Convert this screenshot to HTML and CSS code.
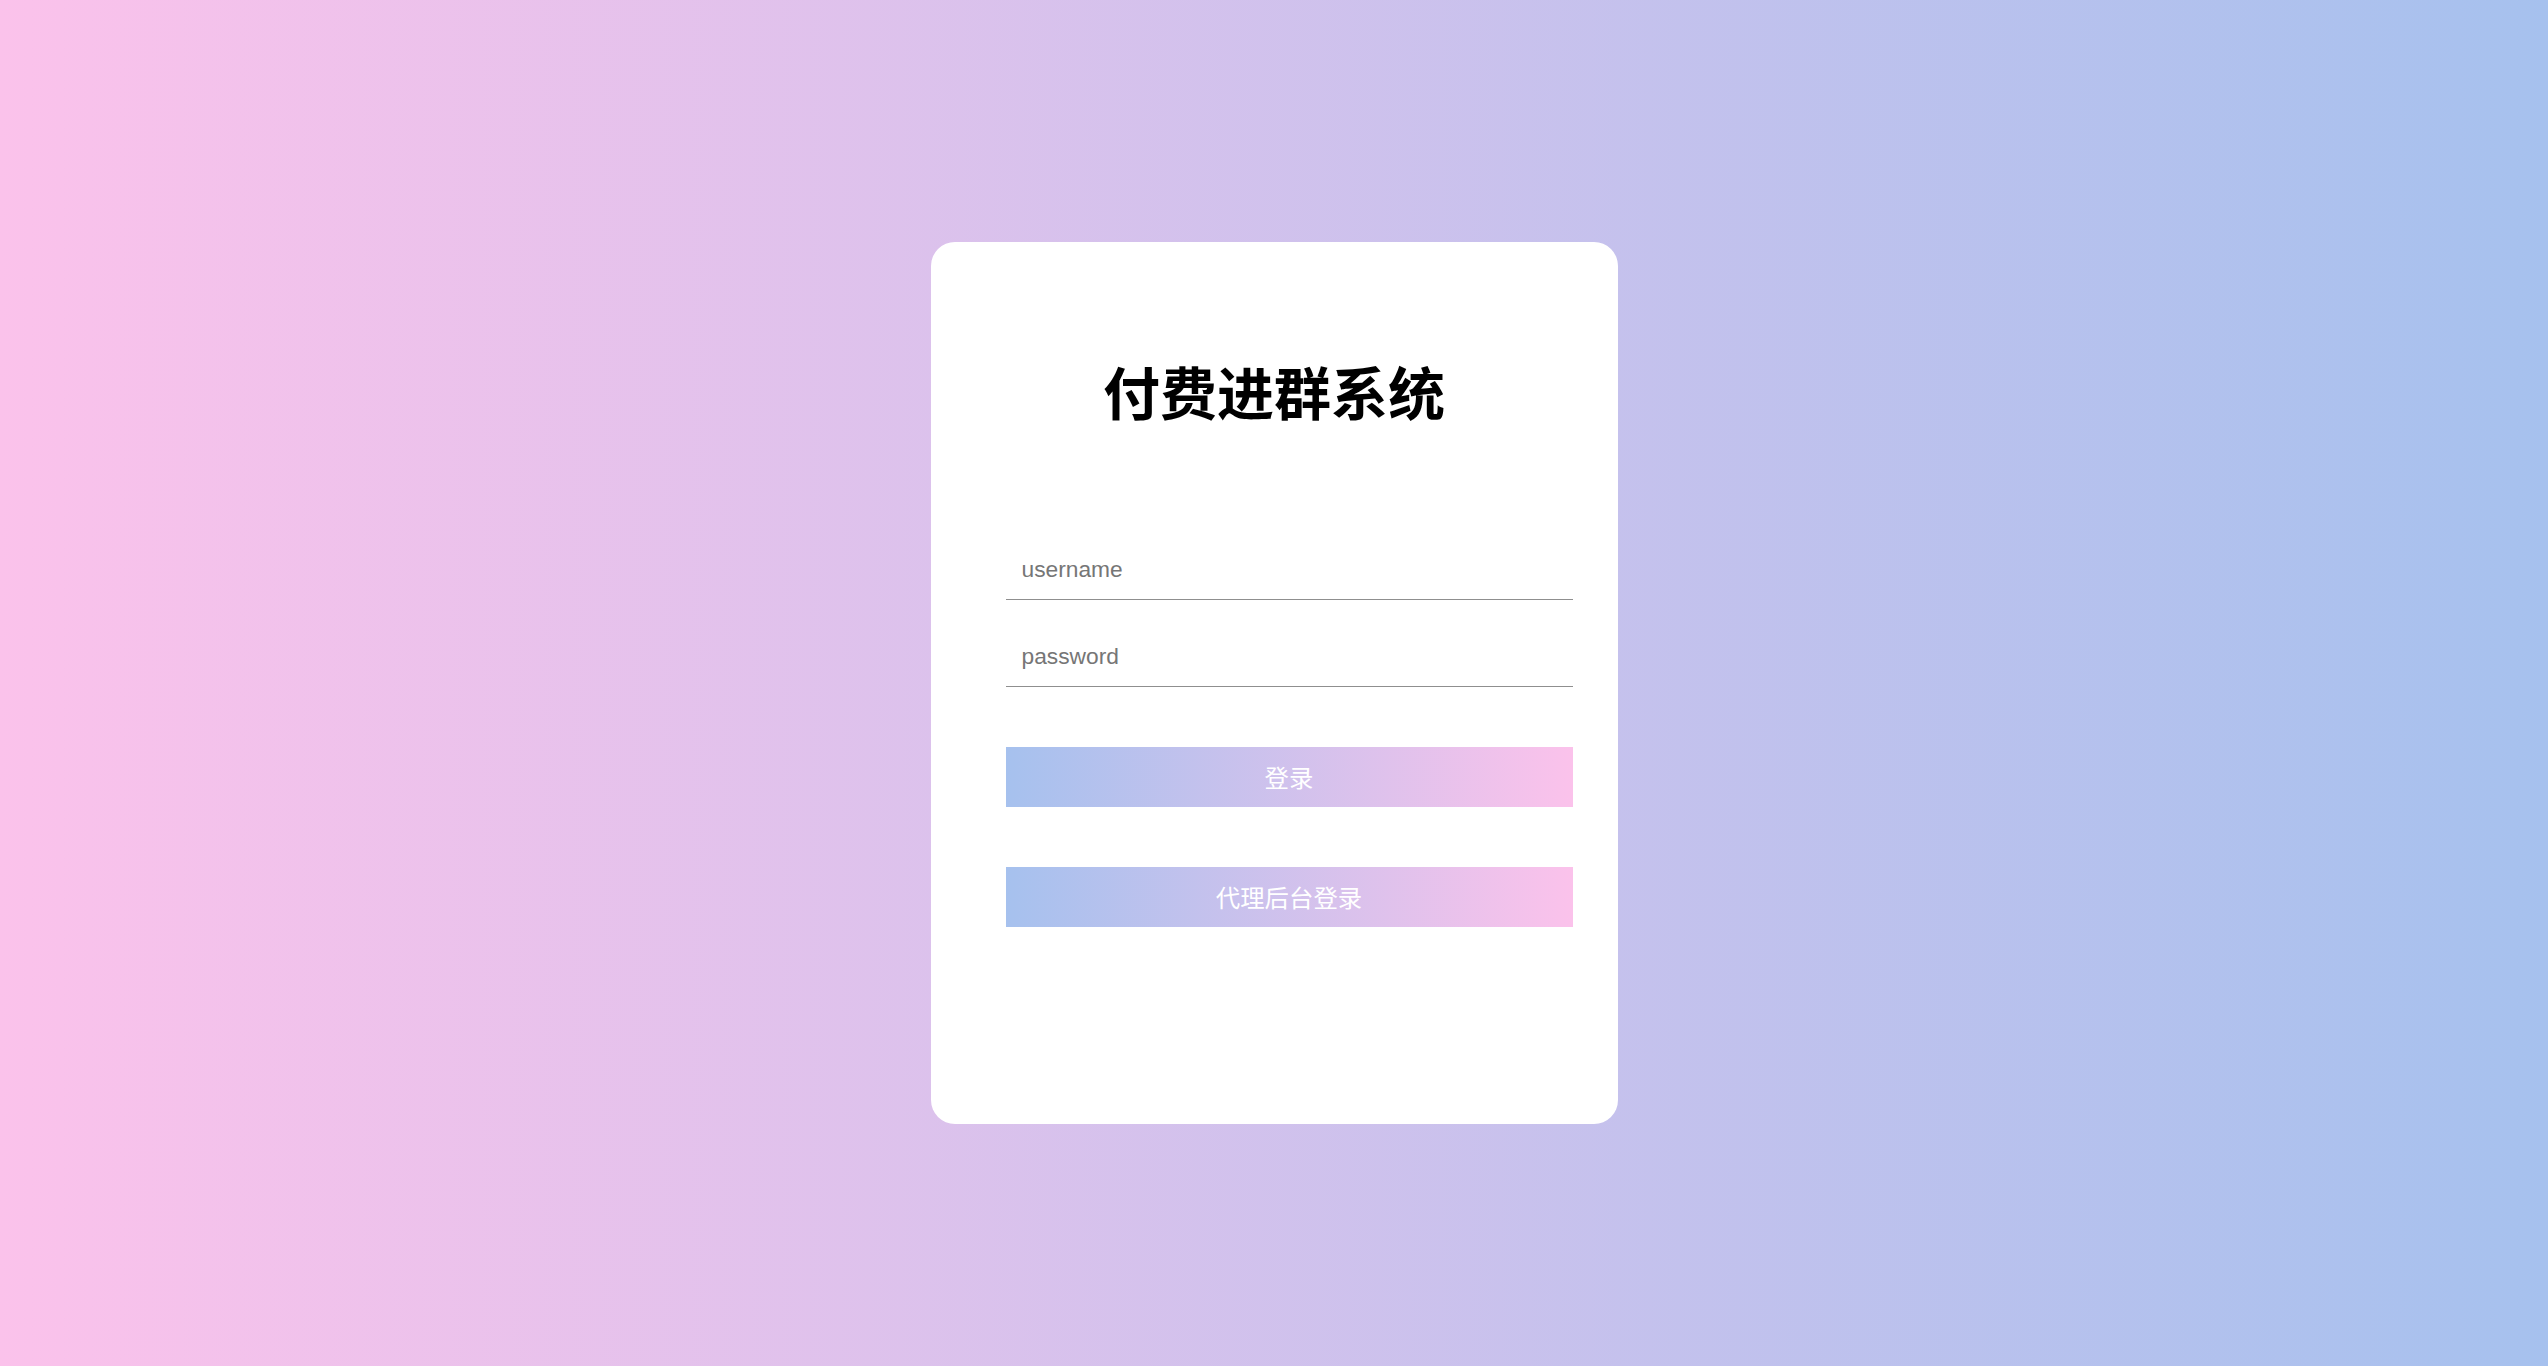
FILE: index.html
```html
<!DOCTYPE html>
<html lang="zh-CN">
<head>
<meta charset="utf-8">
<title>付费进群系统</title>
<link rel="stylesheet" href="styles.css">
</head>
<body>
<div class="page">
  <div class="card">
    <h1 class="title">付费进群系统</h1>
    <form class="form">
      <input class="field" type="text" placeholder="username">
      <input class="field field-gap" type="password" placeholder="password">
      <button class="btn btn-login" type="button">登录</button>
      <button class="btn btn-agent" type="button">代理后台登录</button>
    </form>
  </div>
</div>
</body>
</html>
```

FILE: styles.css
```css
html, body {
  margin: 0;
  padding: 0;
  height: 100%;
}

body {
  background: linear-gradient(to right, #fbc2eb, #a6c1ee);
  font-family: "Liberation Sans", "Noto Sans CJK SC", sans-serif;
}

.page {
  height: 100vh;
  display: flex;
  align-items: center;
  justify-content: center;
}

.card {
  width: 687px;
  height: 882px;
  box-sizing: border-box;
  background: #ffffff;
  border-radius: 24px;
  padding-top: 114px;
}

.title {
  margin: 0;
  text-align: center;
  font-family: "Noto Sans CJK SC", sans-serif;
  font-weight: 700;
  font-size: 57px;
  line-height: 68px;
  color: #000000;
}

.form {
  display: flex;
  flex-direction: column;
  margin: 116px 45px 0 75px;
}

.field {
  display: block;
  box-sizing: border-box;
  width: 100%;
  height: 60px;
  margin: 0;
  padding: 0 16px;
  border: none;
  border-bottom: 1.6px solid #8f8f8f;
  outline: none;
  background: transparent;
  font-family: "Liberation Sans", sans-serif;
  font-size: 22.75px;
  color: #333333;
}

.field::placeholder {
  color: #767676;
}

.field-gap {
  margin-top: 27px;
}

.btn {
  display: block;
  width: 100%;
  height: 60px;
  margin: 60px 0 0;
  padding: 0;
  border: none;
  background: linear-gradient(to right, #a6c1ee, #fbc2eb);
  color: #ffffff;
  font-family: "Noto Sans CJK SC", sans-serif;
  font-size: 24.4px;
  line-height: 60px;
  text-align: center;
  cursor: pointer;
}
```
